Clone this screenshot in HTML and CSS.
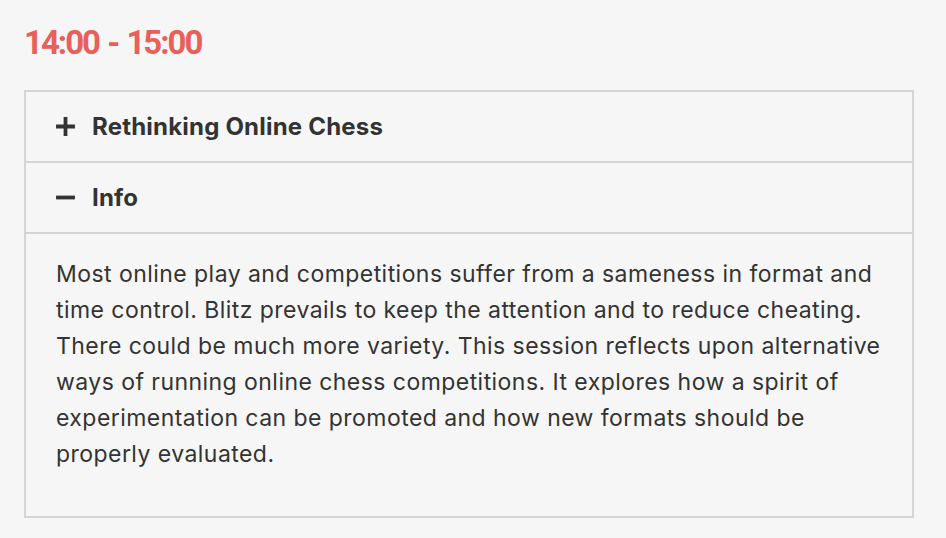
FILE: index.html
```html
<!DOCTYPE html>
<html lang="en">
<head>
    <meta charset="UTF-8">
    <meta name="viewport" content="width=device-width, initial-scale=1.0">
    <title>Schedule</title>
    <link rel="stylesheet" href="styles.css">
</head>
<body>
    <div class="slot">
        <h2 class="slot-time">14:00 - 15:00</h2>

        <div class="accordion">
            <div class="acc-head">
                <svg class="acc-icon" viewBox="0 0 20 20" width="21" height="21">
                    <path d="M10 1v18M1 10h18" stroke="#333" stroke-width="3.6" fill="none"/>
                </svg>
                <span>Rethinking Online Chess</span>
            </div>

            <div class="acc-head">
                <svg class="acc-icon" viewBox="0 0 20 20" width="21" height="21">
                    <path d="M1 10h18" stroke="#333" stroke-width="3.6" fill="none"/>
                </svg>
                <span>Info</span>
            </div>

            <div class="acc-body">
                <p>Most online play and competitions suffer from a sameness in format and time control. Blitz prevails to keep the attention and to reduce cheating. There could be much more variety. This session reflects upon alternative ways of running online chess competitions. It explores how a spirit of experimentation can be promoted and how new formats should be properly evaluated.</p>
            </div>
        </div>
    </div>
</body>
</html>
```

FILE: styles.css
```css
body {
    margin: 0;
    background-color: #f6f6f6;
    color: #333333;
    font-family: Inter, "Noto Sans", sans-serif;
}

.slot {
    padding: 21px 32px 20px 24px;
}

.slot-time {
    margin: 0 0 25px 0;
    font-family: Roboto, "Liberation Sans", sans-serif;
    font-size: 33px;
    font-weight: 700;
    line-height: 44px;
    letter-spacing: -2px;
    word-spacing: 2px;
    color: #e8605a;
}

.accordion {
    border: 2px solid #d5d5d5;
}

.acc-head {
    display: flex;
    align-items: center;
    gap: 16px;
    height: 69px;
    padding: 0 29px;
    border-bottom: 2px solid #d5d5d5;
    font-size: 24px;
    font-weight: 700;
    letter-spacing: 0.2px;
}

.acc-icon {
    flex: none;
}

.acc-body {
    padding: 22px 30px 44px 30px;
}

.acc-body p {
    margin: 0;
    font-size: 23px;
    line-height: 36px;
    letter-spacing: 0.45px;
}
```
